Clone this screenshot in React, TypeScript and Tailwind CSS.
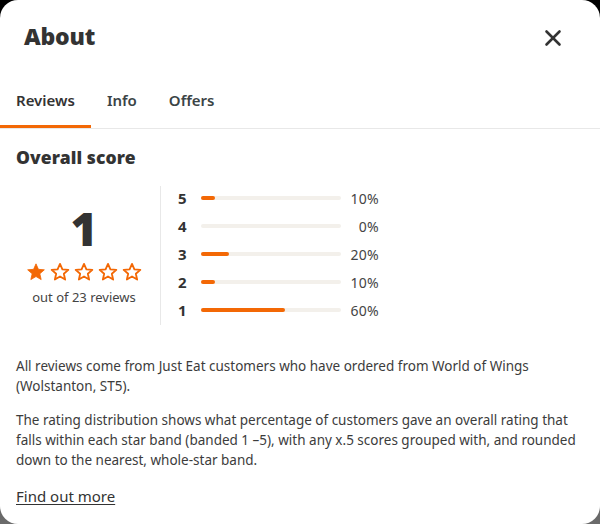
import { X } from "lucide-react";

const bands = [
  { star: 5, percent: 10 },
  { star: 4, percent: 0 },
  { star: 3, percent: 20 },
  { star: 2, percent: 10 },
  { star: 1, percent: 60 },
];

function Star({ filled }: { filled: boolean }) {
  return (
    <svg width="20" height="20" viewBox="0 0 24 24" className="shrink-0">
      <path
        d="M12 2.2l2.9 6.6 7.1.6-5.4 4.7 1.6 7-6.2-3.7-6.2 3.7 1.6-7L2 9.4l7.1-.6z"
        fill={filled ? "#f36805" : "none"}
        stroke="#f36805"
        strokeWidth={filled ? 1 : 2.2}
        strokeLinejoin="round"
      />
    </svg>
  );
}

export default function App() {
  return (
    <div className="h-[524px] w-[600px] bg-gradient-to-b from-black to-[#6b6b6b] font-['Noto_Sans',sans-serif]">
      <div className="h-full w-full overflow-hidden rounded-[18px] bg-white text-[#333]">
        <div className="flex h-[76px] items-center justify-between pb-[3px] pl-6 pr-[34px]">
          <h2 className="text-[23px] font-black tracking-[-0.2px] text-[#333]">About</h2>
          <button className="mt-[2px] text-[#333]">
            <X size={26} strokeWidth={2.4} />
          </button>
        </div>

        <div className="flex border-b border-[#e8e8e8] text-[15px] font-semibold">
          <button className="flex h-[52px] items-center border-b-[3px] border-[#f36805] px-4 text-[#333]">Reviews</button>
          <button className="flex h-[52px] items-center border-b-[3px] border-transparent px-4 text-[#3b4446]">Info</button>
          <button className="flex h-[52px] items-center border-b-[3px] border-transparent px-4 text-[#3b4446]">Offers</button>
        </div>

        <div className="px-4 pt-4">
          <h3 className="text-[17.5px] leading-6 font-black tracking-[0.1px] text-[#333]">Overall score</h3>

          <div className="mt-[17px] flex">
            <div className="flex w-[136px] flex-col items-center justify-center">
              <div className="text-[46px] leading-[48px] font-black text-[#333]">1</div>
              <div className="mt-[10px] flex gap-1">
                {[0, 1, 2, 3, 4].map((i) => (
                  <Star key={i} filled={i === 0} />
                ))}
              </div>
              <div className="mt-[6px] text-[13px] text-[#444]">out of 23 reviews</div>
            </div>

            <div className="ml-2 flex flex-col gap-1 border-l border-[#e8e8e8] pb-[3px] pl-[17px]">
              {bands.map((b) => (
                <div key={b.star} className="flex h-6 items-center">
                  <span className="w-[23px] text-[15px] font-bold text-[#333]">{b.star}</span>
                  <div className="h-[4px] w-[140px] rounded-full bg-[#f3f0eb]">
                    <div className="h-full rounded-full bg-[#f36805]" style={{ width: `${b.percent}%` }} />
                  </div>
                  <span className="w-[38px] text-right text-[14px] tracking-[0.3px] text-[#444]">{b.percent}%</span>
                </div>
              ))}
            </div>
          </div>

          <p className="mt-[31px] text-[13.5px] leading-5 text-[#3c3c3c]">
            All reviews come from Just Eat customers who have ordered from World of Wings (Wolstanton, ST5).
          </p>
          <p className="mt-[14px] text-[13.5px] leading-5 text-[#3c3c3c]">
            The rating distribution shows what percentage of customers gave an overall rating that falls within each star band (banded 1 –5), with any x.5 scores grouped with, and rounded down to the nearest, whole-star band.
          </p>
          <a href="#" className="mt-4 inline-block text-[15px] leading-5 text-[#333] underline underline-offset-2">
            Find out more
          </a>
        </div>
      </div>
    </div>
  );
}
